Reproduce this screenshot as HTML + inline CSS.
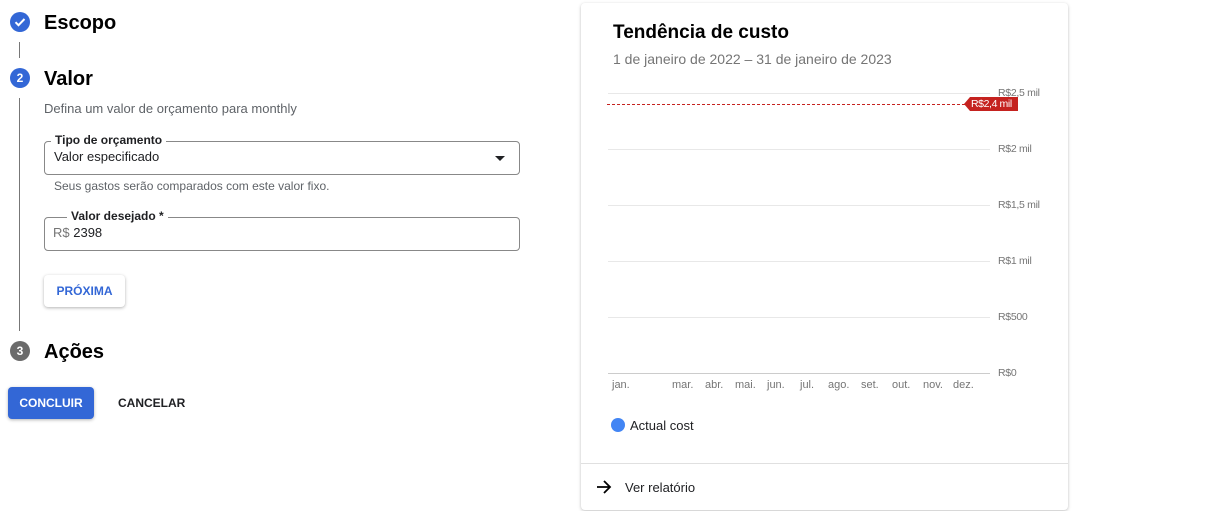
<!DOCTYPE html>
<html><head><meta charset="utf-8"><style>
*{margin:0;padding:0;box-sizing:border-box}
body{width:1228px;height:511px;background:#fff;font-family:"Liberation Sans",Arial,sans-serif;position:relative;overflow:hidden;color:#202124}
.a{position:absolute;white-space:nowrap}
.circ{position:absolute;width:20px;height:20px;border-radius:50%;color:#fff;font-size:12px;font-weight:bold;text-align:center;line-height:20px}
.h{font-size:20px;font-weight:bold;color:#000}
.vl{position:absolute;left:19px;width:1px;background:#777}
.box{position:absolute;border:1px solid #888;border-radius:4px}
.lbl{position:absolute;background:#fff;padding:0 4px;font-size:12px;font-weight:bold;color:#202124;top:-9px}
.grid{position:absolute;left:608px;width:382px;height:1px;background:#e8e8e8}
.yl{position:absolute;left:998px;font-size:10.5px;color:#757575;letter-spacing:-0.3px}
.m{position:absolute;top:379px;font-size:11px;color:#757575}
</style></head><body>
<div class="circ" style="left:10px;top:12px;background:#3367d6"><svg width="20" height="20" viewBox="0 0 20 20"><path d="M5.5 10.2l3 3 6-6.2" stroke="#fff" stroke-width="2" fill="none"/></svg></div>
<div class="a h" style="left:44px;top:12px">Escopo</div>
<div class="vl" style="top:42px;height:16px"></div>
<div class="circ" style="left:10px;top:68px;background:#3367d6">2</div>
<div class="a h" style="left:44px;top:68px">Valor</div>
<div class="vl" style="top:98px;height:233px"></div>
<div class="a" style="left:44px;top:101px;font-size:13px;color:#5f6368">Defina um valor de orçamento para monthly</div>
<div class="box" style="left:44px;top:141px;width:476px;height:34px">
<div class="lbl" style="left:6px">Tipo de orçamento</div>
<div class="a" style="left:9px;top:7px;font-size:13px">Valor especificado</div>
<div class="a" style="left:450px;top:14px;width:0;height:0;border-left:5px solid transparent;border-right:5px solid transparent;border-top:5px solid #202124"></div>
</div>
<div class="a" style="left:54px;top:179px;font-size:12px;color:#5f6368">Seus gastos serão comparados com este valor fixo.</div>
<div class="box" style="left:44px;top:217px;width:476px;height:34px">
<div class="lbl" style="left:22px">Valor desejado *</div>
<div class="a" style="left:8px;top:7px;font-size:13px"><span style="color:#757575">R$</span> 2398</div>
</div>
<div class="a" style="left:44px;top:275px;width:81px;height:32px;border-radius:4px;box-shadow:0 1px 3px rgba(0,0,0,.3);color:#3367d6;font-size:12px;font-weight:bold;text-align:center;line-height:33px">PRÓXIMA</div>
<div class="circ" style="left:10px;top:341px;background:#6b6b6b">3</div>
<div class="a h" style="left:44px;top:341px">Ações</div>
<div class="a" style="left:8px;top:387px;width:86px;height:32px;border-radius:4px;background:#3367d6;box-shadow:0 1px 3px rgba(0,0,0,.3);color:#fff;font-size:12px;font-weight:bold;text-align:center;line-height:33px">CONCLUIR</div>
<div class="a" style="left:118px;top:396px;font-size:12px;font-weight:bold">CANCELAR</div>

<div class="a" style="left:581px;top:3px;width:487px;height:507px;border-radius:4px;box-shadow:0 1px 3px rgba(0,0,0,.25);background:#fff"></div>
<div class="a" style="left:613px;top:22px;font-size:19px;font-weight:bold;color:#000">Tendência de custo</div>
<div class="a" style="left:613px;top:51px;font-size:14px;color:#757575">1 de janeiro de 2022 – 31 de janeiro de 2023</div>
<div class="grid" style="top:93px"></div><div class="grid" style="top:149px"></div><div class="grid" style="top:205px"></div><div class="grid" style="top:261px"></div><div class="grid" style="top:317px"></div><div class="grid" style="top:373px;background:#ccc"></div>
<div class="yl" style="top:87px">R$2,5 mil</div>
<div class="yl" style="top:143px">R$2 mil</div>
<div class="yl" style="top:199px">R$1,5 mil</div>
<div class="yl" style="top:255px">R$1 mil</div>
<div class="yl" style="top:311px">R$500</div>
<div class="yl" style="top:367px">R$0</div>
<div class="a" style="left:607px;top:104px;width:358px;border-top:1px dashed #c5221f"></div>
<div class="a" style="left:964px;top:97px;width:0;height:0;border-top:7px solid transparent;border-bottom:7px solid transparent;border-right:6px solid #c5221f"></div>
<div class="a" style="left:970px;top:97px;width:48px;height:14px;background:#c5221f;color:#fff;font-size:10.5px;letter-spacing:-0.4px;line-height:14px;padding-left:1px;overflow:hidden">R$2,4 mil</div>
<div class="m" style="left:612px">jan.</div><div class="m" style="left:672px">mar.</div><div class="m" style="left:705px">abr.</div><div class="m" style="left:735px">mai.</div><div class="m" style="left:767px">jun.</div><div class="m" style="left:800px">jul.</div><div class="m" style="left:828px">ago.</div><div class="m" style="left:861px">set.</div><div class="m" style="left:892px">out.</div><div class="m" style="left:923px">nov.</div><div class="m" style="left:953px">dez.</div>
<div class="a" style="left:611px;top:418px;width:14px;height:14px;border-radius:50%;background:#4285f4"></div>
<div class="a" style="left:630px;top:418px;font-size:13px">Actual cost</div>
<div class="a" style="left:581px;top:463px;width:487px;height:1px;background:#e0e0e0"></div>
<svg class="a" style="left:595px;top:478px" width="18" height="18" viewBox="0 0 18 18"><path d="M2 9h13M9 3l6 6-6 6" stroke="#000" stroke-width="1.8" fill="none"/></svg>
<div class="a" style="left:625px;top:480px;font-size:13px">Ver relatório</div>
</body></html>
